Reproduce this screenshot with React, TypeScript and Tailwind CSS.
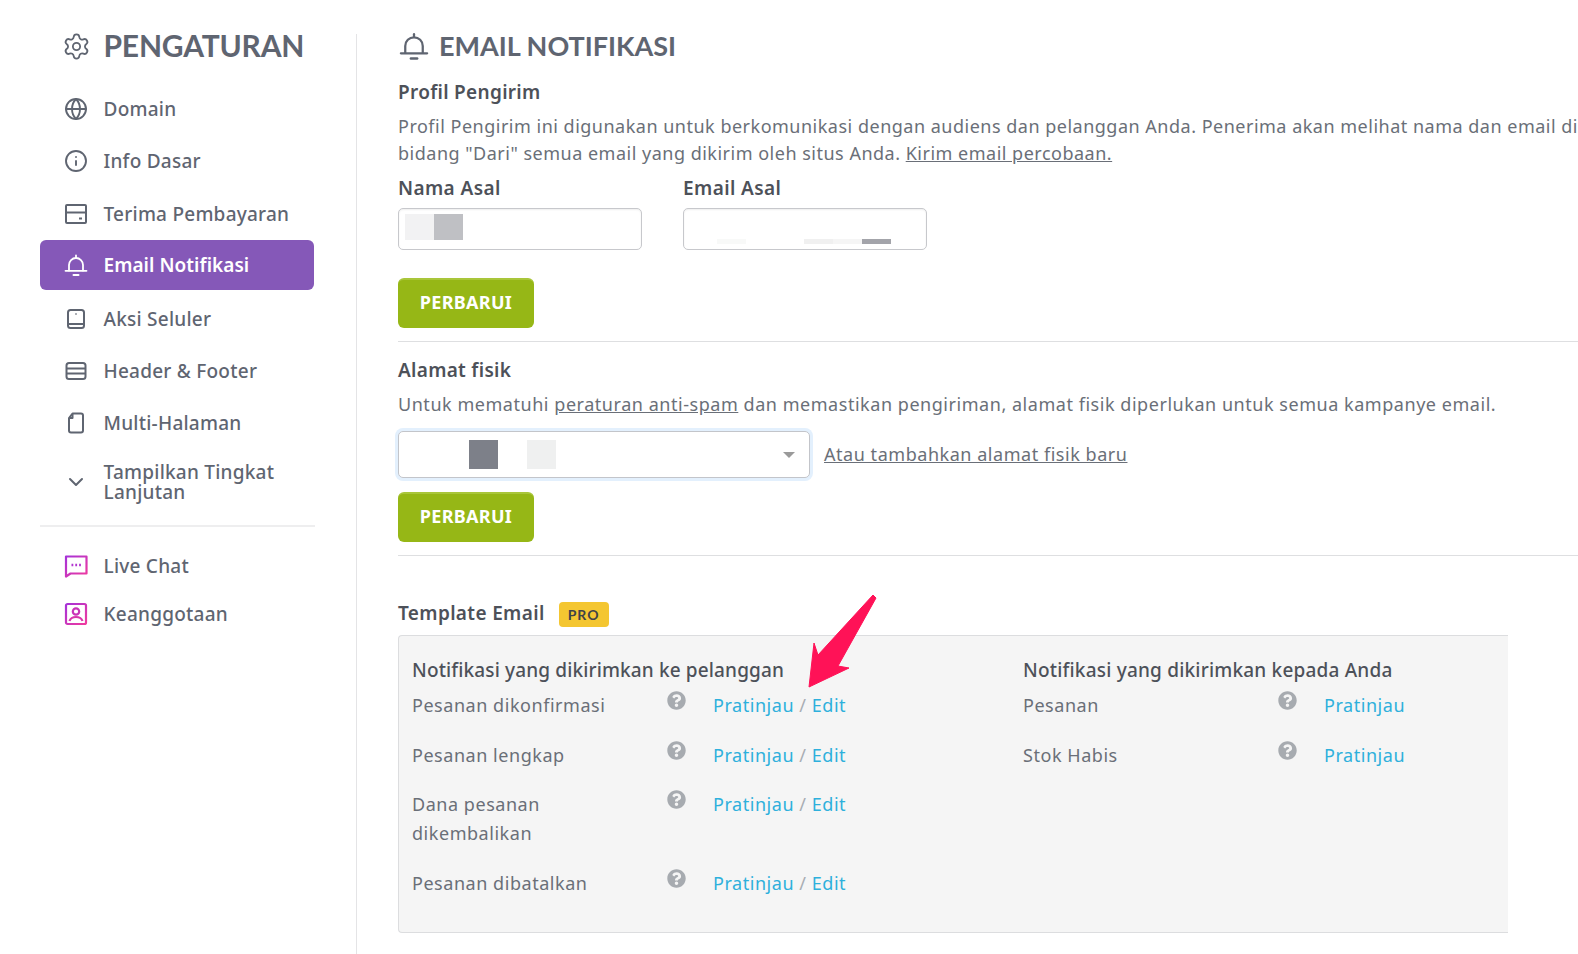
import { FaQuestionCircle } from "react-icons/fa";
import { ChevronDown, Globe, Info, Settings } from "lucide-react";
import type { ReactNode } from "react";

function BellIcon({ size = 24 }: { size?: number }) {
  return (
    <svg width={size} height={size} viewBox="0 0 24 24" fill="none" stroke="currentColor" strokeWidth="1.8" strokeLinecap="round">
      <path d="M5 17.500V12a7 7 0 0 1 14 0v5.500" />
      <path d="M1.500 17.800h21" />
      <path d="M12 2.500v2.200" />
      <path d="M9.500 22h5" strokeWidth="2" />
    </svg>
  );
}

function CardIcon() {
  return (
    <svg width="24" height="24" viewBox="0 0 24 24" fill="none" stroke="currentColor" strokeWidth="2">
      <rect x="2" y="3" width="20" height="18" rx="1" />
      <path d="M2 10.500h20" />
      <path d="M15 16.500h3" />
    </svg>
  );
}

function TabletIcon() {
  return (
    <svg width="24" height="24" viewBox="0 0 24 24" fill="none" stroke="currentColor" strokeWidth="2">
      <rect x="4" y="3" width="16" height="18" rx="2.500" />
      <path d="M4 17h16" />
      <path d="M12 6.500v1" />
    </svg>
  );
}

function LayoutIcon() {
  return (
    <svg width="24" height="24" viewBox="0 0 24 24" fill="none" stroke="currentColor" strokeWidth="2">
      <rect x="2.500" y="4" width="19" height="16" rx="2.500" />
      <path d="M2.500 9.500h19M2.500 14.500h19" />
    </svg>
  );
}

function PageIcon() {
  return (
    <svg width="24" height="24" viewBox="0 0 24 24" fill="none" stroke="currentColor" strokeWidth="2" strokeLinejoin="round">
      <path d="M8.500 2.500H17a2 2 0 0 1 2 2v15a2 2 0 0 1-2 2H7a2 2 0 0 1-2-2V7z" />
      <path d="M8.500 3v4h-3.500" />
    </svg>
  );
}

function ChatIcon() {
  return (
    <svg width="24" height="24" viewBox="0 0 24 24" fill="none" strokeWidth="2.200">
      <defs>
        <linearGradient id="chatGrad" x1="0" y1="0" x2="1" y2="1">
          <stop offset="0" stopColor="#a632d8" />
          <stop offset="1" stopColor="#f03a9e" />
        </linearGradient>
      </defs>
      <path d="M2 2.500h20.500v17H6.500L2 22.500z" stroke="url(#chatGrad)" strokeLinejoin="round" />
      <path d="M7.500 11h1.800M11.300 11h1.800M15.100 11h1.800" stroke="#b234d0" strokeWidth="2.400" />
    </svg>
  );
}

function MemberIcon() {
  return (
    <svg width="24" height="24" viewBox="0 0 24 24" fill="none" strokeWidth="2.200">
      <defs>
        <linearGradient id="memberGrad" x1="0" y1="0" x2="1" y2="1">
          <stop offset="0" stopColor="#a632d8" />
          <stop offset="1" stopColor="#f03a9e" />
        </linearGradient>
      </defs>
      <rect x="2" y="2" width="20" height="20" rx="1.500" stroke="url(#memberGrad)" />
      <circle cx="12" cy="9.500" r="3.200" stroke="#c934b8" />
      <path d="M5.500 19c1-3 3.500-4 6.500-4s5.500 1 6.500 4" stroke="#d836ac" />
    </svg>
  );
}

function NavItem({ icon, label, active }: { icon: ReactNode; label: ReactNode; active?: boolean }) {
  return (
    <div
      className={`flex items-center h-[50px] rounded-md pl-[24px] ${
        active
          ? "bg-[#8558b8] text-white font-semibold tracking-[0.05px] -mt-[1px] mb-[3.4px] mr-[1px]"
          : "text-[#5f6571] font-medium tracking-[0.24px] mb-[2.4px]"
      }`}
    >
      <span className="w-[24px] h-[24px] flex items-center justify-center shrink-0">{icon}</span>
      <span className="ml-[15.500px] text-[19px] leading-[20px]">{label}</span>
    </div>
  );
}

function Sidebar() {
  return (
    <aside className="w-[357px] shrink-0 mt-[34px] border-r border-[#e4e4e6] pl-[40px] pr-[41px] h-[920px]">
      <div className="flex items-center pl-[22px] h-[24px] text-[#5f6571]">
        <Settings size={29} strokeWidth={1.5} className="shrink-0" />
        <span className="ml-[12.500px] -mt-[1px] text-[30px] font-bold tracking-[-0.2px] font-['Lato',sans-serif]">PENGATURAN</span>
      </div>
      <div className="mt-[26px]">
        <NavItem icon={<Globe size={24} strokeWidth={1.9} />} label="Domain" />
        <NavItem icon={<Info size={24} strokeWidth={1.9} />} label="Info Dasar" />
        <NavItem icon={<CardIcon />} label="Terima Pembayaran" />
        <NavItem icon={<BellIcon />} label="Email Notifikasi" active />
        <NavItem icon={<TabletIcon />} label="Aksi Seluler" />
        <NavItem icon={<LayoutIcon />} label="Header & Footer" />
        <NavItem icon={<PageIcon />} label="Multi-Halaman" />
        <div className="pt-[6px]">
          <NavItem icon={<ChevronDown size={24} strokeWidth={2} />} label={<>Tampilkan Tingkat<br />Lanjutan</>} />
        </div>
      </div>
      <div className="h-[2px] bg-[#eeeeef] mt-[18px] mb-[14px]" />
      <NavItem icon={<ChatIcon />} label="Live Chat" />
      <div className="-mt-[4px]">
        <NavItem icon={<MemberIcon />} label="Keanggotaan" />
      </div>
    </aside>
  );
}

function UpdateButton() {
  return (
    <button className="w-[136px] h-[50px] rounded-md bg-[#96b716] border-t-2 border-[#a9c63a] pb-[3px] text-white text-[18px] tracking-[0.3px] font-bold">
      PERBARUI
    </button>
  );
}

function TextInput({ children }: { children: ReactNode }) {
  return (
    <div className="relative w-[244px] h-[42px] rounded-[5px] border border-[#c7c8cc] bg-white shadow-[inset_0_1px_2px_rgba(0,0,0,0.07)] overflow-hidden">
      {children}
    </div>
  );
}

function TemplateRow({ label, edit = true }: { label: ReactNode; edit?: boolean }) {
  return (
    <div className="flex items-start mb-[20.5px] text-[18px] leading-[29px] tracking-[0.54px]">
      <div className="w-[255px] pr-[40px] shrink-0 text-[#6a6f78]">{label}</div>
      <FaQuestionCircle size={19} className="text-[#a7abb0] shrink-0" />
      <div className="ml-[27px] text-[#2eb0dc]">
        Pratinjau
        {edit && (
          <>
            <span className="text-[#a8adb3]"> / </span>Edit
          </>
        )}
      </div>
    </div>
  );
}

export default function App() {
  return (
    <div className="relative flex w-[1578px] h-[954px] overflow-hidden bg-white font-['Noto_Sans',sans-serif]">
      <Sidebar />
      <main className="flex-1 min-w-0 overflow-hidden pl-[41px]">
        <div className="flex items-center h-[24px] mt-[34px] text-[#5f6571]">
          <span className="ml-[1px]">
            <BellIcon size={30} />
          </span>
          <span className="ml-[10px] text-[27px] font-bold font-['Lato',sans-serif]">EMAIL NOTIFIKASI</span>
        </div>

        <h2 className="mt-[21px] text-[19px] leading-[26px] font-semibold tracking-[0.3px] text-[#4d5159]">Profil Pengirim</h2>
        <p className="mt-[8px] w-[1185px] text-[18px] leading-[27px] tracking-[0.5px] text-[#6a6f78]">
          Profil Pengirim ini digunakan untuk berkomunikasi dengan audiens dan pelanggan Anda. Penerima akan melihat nama dan email di bidang "Dari" semua email yang dikirim oleh situs Anda.{" "}
          <span className="underline">Kirim email percobaan.</span>
        </p>

        <div className="flex gap-[41px] mt-[8px]">
          <div>
            <div className="text-[19px] leading-[26px] font-semibold tracking-[0.4px] text-[#4d5159]">Nama Asal</div>
            <div className="mt-[7px]">
              <TextInput>
                <div className="flex mt-[5px] ml-[6px]">
                  <div className="w-[29px] h-[26px] bg-[#f2f2f3]" />
                  <div className="w-[29px] h-[26px] bg-[#bfc0c4]" />
                </div>
              </TextInput>
            </div>
          </div>
          <div>
            <div className="text-[19px] leading-[26px] font-semibold tracking-[0.4px] text-[#4d5159]">Email Asal</div>
            <div className="mt-[7px]">
              <TextInput>
                <div className="flex mt-[30px] ml-[33px]">
                  <div className="w-[29px] h-[5px] bg-[#f8f9f8]" />
                  <div className="w-[58px] h-[5px]" />
                  <div className="w-[29px] h-[5px] bg-[#f0f0f0]" />
                  <div className="w-[29px] h-[5px] bg-[#f5f5f5]" />
                  <div className="w-[29px] h-[5px] bg-[#a3a4aa]" />
                </div>
              </TextInput>
            </div>
          </div>
        </div>

        <div className="mt-[28px]">
          <UpdateButton />
        </div>
        <div className="h-px bg-[#dedfe1] mt-[13px]" />

        <h2 className="mt-[15px] text-[19px] leading-[26px] font-semibold tracking-[0.3px] text-[#4d5159]">Alamat fisik</h2>
        <p className="mt-[8px] text-[18px] leading-[27px] tracking-[0.54px] text-[#6a6f78] whitespace-nowrap">
          Untuk mematuhi <span className="underline">peraturan anti-spam</span> dan memastikan pengiriman, alamat fisik diperlukan untuk semua kampanye email.
        </p>

        <div className="flex items-center mt-[13px]">
          <div className="w-[412px] h-[47px] rounded-[5px] border border-[#c3c5ca] ring-[3px] ring-[#e3f0fd] bg-white flex items-center relative">
            <div className="w-[29px] h-[29px] bg-[#7d8089] ml-[70px]" />
            <div className="w-[29px] h-[29px] bg-[#eff0f0] ml-[29px]" />
            <div className="ml-auto mr-[14px] w-0 h-0 border-x-[6px] border-x-transparent border-t-[6px] border-t-[#9a9a9a]" />
          </div>
          <span className="ml-[14px] text-[18px] tracking-[0.54px] text-[#6a6f78] underline">Atau tambahkan alamat fisik baru</span>
        </div>

        <div className="mt-[14px]">
          <UpdateButton />
        </div>
        <div className="h-px bg-[#dedfe1] mt-[13px]" />

        <div className="flex items-center mt-[44px] h-[26px]">
          <span className="text-[19px] font-semibold tracking-[0.35px] text-[#4d5159]">Template Email</span>
          <span className="ml-[14px] mt-[2px] w-[50px] h-[25px] rounded-[4px] bg-[#f4c631] flex items-center justify-center text-[14px] font-bold tracking-[1px] text-[#3f4248] font-['Lato',sans-serif]">
            PRO
          </span>
        </div>

        <div className="mt-[9px] w-[1110px] h-[298px] rounded-l-[4px] border border-r-0 border-[#dcdddf] bg-[#f5f5f5] pl-[13px] pt-[20px] flex">
          <div className="w-[611px] shrink-0">
            <h3 className="text-[19px] leading-[28px] font-medium tracking-[0.14px] text-[#4d5159] mb-[7px]">Notifikasi yang dikirimkan ke pelanggan</h3>
            <TemplateRow label="Pesanan dikonfirmasi" />
            <TemplateRow label="Pesanan lengkap" />
            <TemplateRow label="Dana pesanan dikembalikan" />
            <TemplateRow label="Pesanan dibatalkan" />
          </div>
          <div className="flex-1">
            <h3 className="text-[19px] leading-[28px] font-medium tracking-[0.2px] text-[#4d5159] mb-[7px]">Notifikasi yang dikirimkan kepada Anda</h3>
            <TemplateRow label="Pesanan" edit={false} />
            <TemplateRow label="Stok Habis" edit={false} />
          </div>
        </div>
      </main>

      {/* panah penunjuk ke link Edit */}
      <svg className="absolute left-[800px] top-[590px] pointer-events-none" width="84" height="104" viewBox="800 590 84 104">
        <polygon points="809,687 814,643 818,655 873,595 876,598 838,666 849,668" fill="#ff1257" stroke="#ff1257" strokeLinejoin="round" strokeWidth="1" />
      </svg>
    </div>
  );
}
